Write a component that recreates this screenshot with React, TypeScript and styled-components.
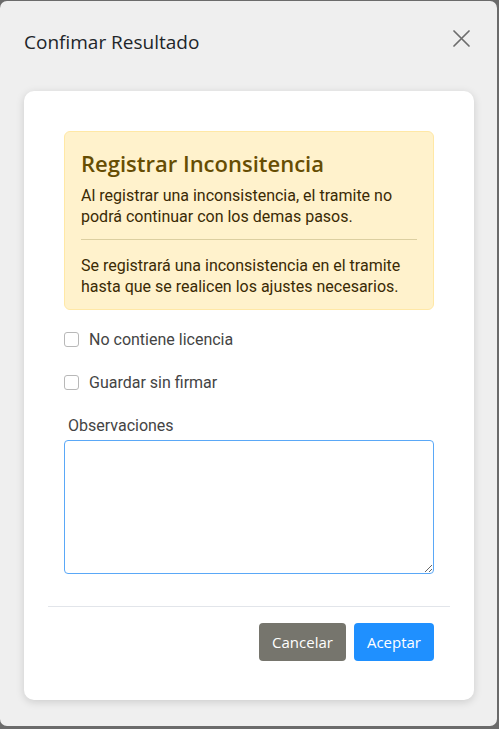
import styled, { createGlobalStyle } from "styled-components";

const GlobalStyle = createGlobalStyle`
  html, body {
    margin: 0;
    padding: 0;
    background: #6b6b6b;
  }
  * {
    box-sizing: border-box;
  }
`;

const App = () => {
  return (
    <>
      <GlobalStyle />
      <Modal>
        <Header>
          <Title>Confimar Resultado</Title>
          <CloseButton aria-label="Cerrar">
            <svg width="17" height="17" viewBox="0 0 17 17">
              <path
                d="M1 1 L16 16 M16 1 L1 16"
                stroke="#6d6d6d"
                strokeWidth="1.7"
                strokeLinecap="round"
              />
            </svg>
          </CloseButton>
        </Header>
        <Card>
          <Body>
            <Alert>
              <AlertTitle>Registrar Inconsitencia</AlertTitle>
              <AlertText>
                Al registrar una inconsistencia, el tramite no podrá continuar
                con los demas pasos.
              </AlertText>
              <AlertRule />
              <AlertText>
                Se registrará una inconsistencia en el tramite hasta que se
                realicen los ajustes necesarios.
              </AlertText>
            </Alert>
            <CheckRow>
              <CheckBox type="checkbox" />
              <span>No contiene licencia</span>
            </CheckRow>
            <CheckRow>
              <CheckBox type="checkbox" />
              <span>Guardar sin firmar</span>
            </CheckRow>
            <Field>
              <FieldLabel>Observaciones</FieldLabel>
              <TextArea />
            </Field>
          </Body>
          <Footer>
            <Button $variant="secondary">Cancelar</Button>
            <Button $variant="primary">Aceptar</Button>
          </Footer>
        </Card>
      </Modal>
    </>
  );
};

const Modal = styled.div`
  width: 497px;
  height: 725px;
  margin-top: 1px;
  background: #efefef;
  border-radius: 7px;
  display: flex;
  flex-direction: column;
`;

const Header = styled.div`
  display: flex;
  justify-content: space-between;
  align-items: flex-start;
  height: 90px;
  padding: 29px 27px 0 24px;
`;

const Title = styled.h2`
  margin: 0;
  font-family: "Open Sans", "Liberation Sans", sans-serif;
  font-size: 19px;
  line-height: 24px;
  font-weight: 500;
  color: #212529;
`;

const CloseButton = styled.button`
  border: none;
  background: transparent;
  padding: 0;
  width: 17px;
  height: 17px;
  display: flex;
  cursor: pointer;
`;

const Card = styled.div`
  margin: 0 23px 0 24px;
  height: 609px;
  background: #ffffff;
  border-radius: 10px;
  box-shadow: 0 2px 8px rgba(0, 0, 0, 0.15);
  padding: 40px 24px 39px;
  display: flex;
  flex-direction: column;
`;

const Body = styled.div`
  padding: 0 16px;
  display: flex;
  flex-direction: column;
`;

/* alerta amarilla */
const Alert = styled.div`
  background: #fff2cc;
  border: 1px solid #ffe8a6;
  border-radius: 6px;
  padding: 17px 16px 12px;
  height: 179px;
`;

const AlertTitle = styled.h4`
  margin: 0 0 8px;
  font-family: "Open Sans", "Liberation Sans", sans-serif;
  font-size: 22px;
  line-height: 28px;
  font-weight: 600;
  color: #664d03;
`;

const AlertText = styled.p`
  margin: 0;
  font-family: Roboto, "Liberation Sans", sans-serif;
  font-size: 16px;
  line-height: 21px;
  color: #3a2a05;
`;

const AlertRule = styled.hr`
  margin: 12px 0 15px;
  border: none;
  border-top: 1px solid #dccfa0;
`;

const CheckRow = styled.label`
  display: flex;
  align-items: center;
  gap: 10px;
  height: 15px;
  margin-top: 22px;
  & + & {
    margin-top: 28px;
  }
  font-family: Roboto, "Liberation Sans", sans-serif;
  font-size: 16px;
  color: #444444;
`;

const CheckBox = styled.input`
  appearance: none;
  margin: 0;
  width: 15px;
  height: 15px;
  border: 1px solid #b8b8b8;
  border-radius: 3px;
  background: #fff;
`;

const Field = styled.div`
  display: flex;
  flex-direction: column;
  margin-top: 27px;
`;

const FieldLabel = styled.label`
  padding-left: 4px;
  font-family: Roboto, "Liberation Sans", sans-serif;
  font-size: 16px;
  line-height: 18px;
  color: #444444;
  margin-bottom: 5px;
`;

const TextArea = styled.textarea`
  width: 370px;
  height: 134px;
  border: 1px solid #5aa8f7;
  border-radius: 4px;
  outline: none;
  font-family: Roboto, "Liberation Sans", sans-serif;
  font-size: 16px;
`;

const Footer = styled.div`
  margin-top: auto;
  border-top: 1px solid #e2e5ea;
  padding: 16px 16px 0;
  display: flex;
  justify-content: flex-end;
  gap: 8px;
`;

const Button = styled.button<{ $variant: "primary" | "secondary" }>`
  height: 38px;
  padding: 0 13px;
  border: none;
  border-radius: 4px;
  font-family: "Open Sans", "Liberation Sans", sans-serif;
  font-size: 15px;
  color: #ffffff;
  background: ${(p) => (p.$variant === "primary" ? "#1f90ff" : "#76756d")};
  cursor: pointer;
`;

export default App;
